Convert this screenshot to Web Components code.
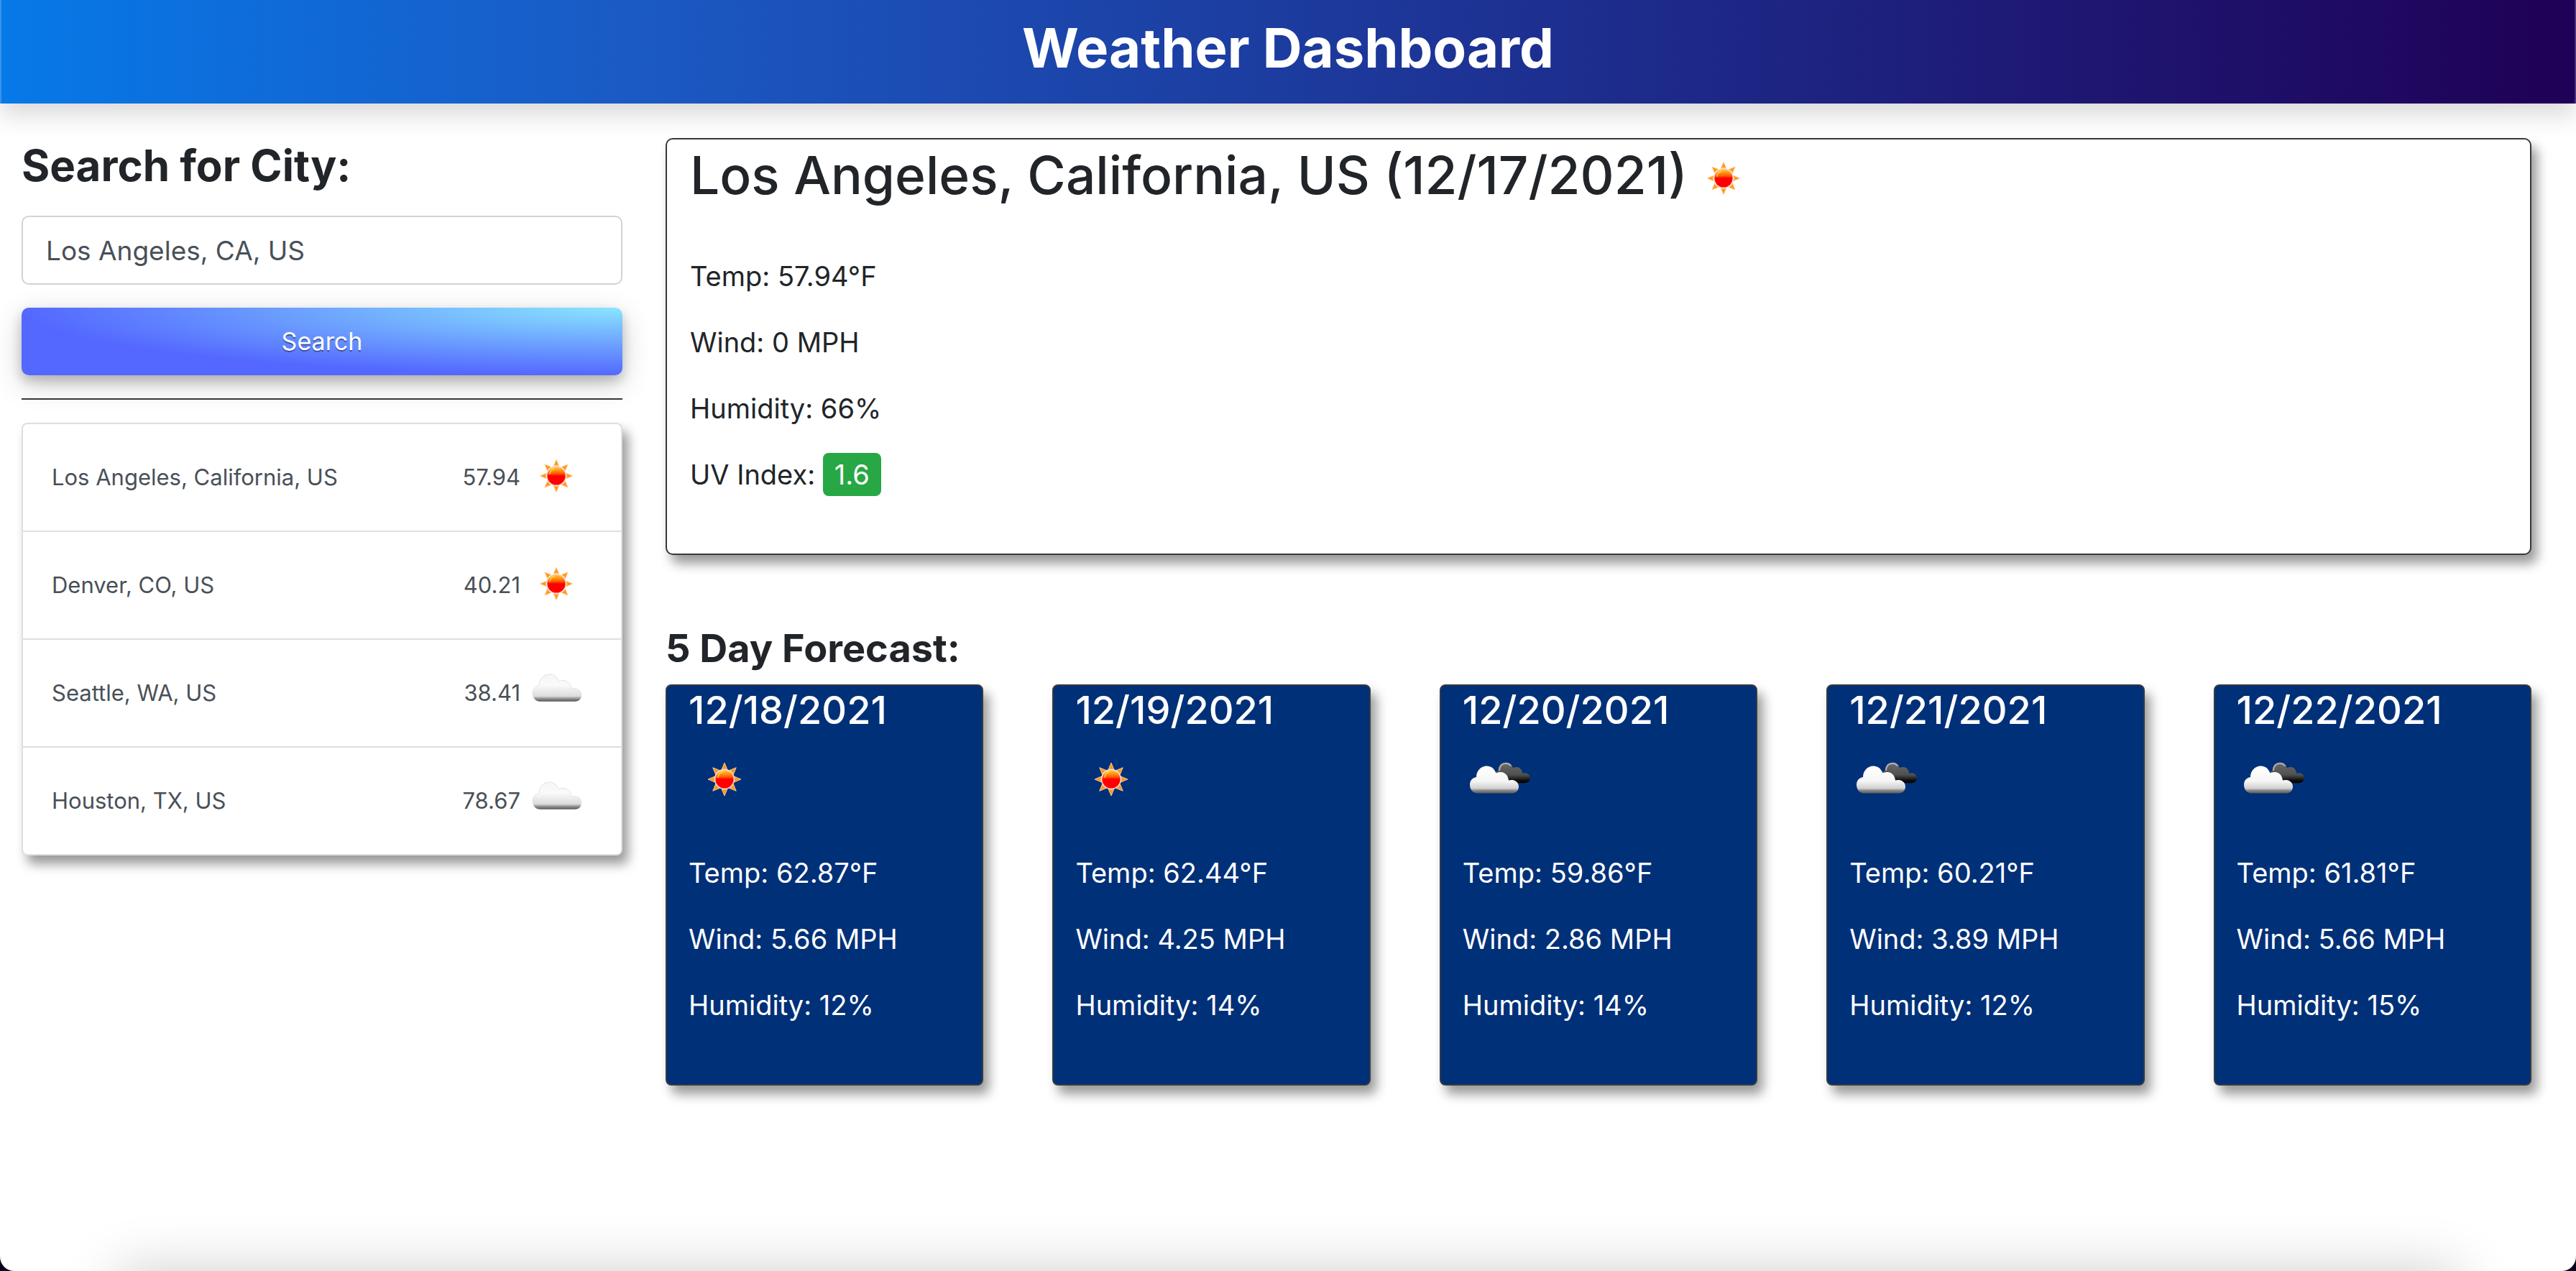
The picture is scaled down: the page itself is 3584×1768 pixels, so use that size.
<!DOCTYPE html>
<html lang="en">
<head>
<meta charset="utf-8">
<meta name="viewport" content="width=device-width, initial-scale=1">
<title>Weather Dashboard</title>
<style>
  html { background: #08001c; }
  body { margin: 0; font-family: Inter, "Liberation Sans", sans-serif; font-size: 38px; line-height: 60px; color: #212529; --edge: #343a40; --lift: 8px 12px 16px rgba(0, 0, 0, .4); }
</style>
</head>
<body>
<weather-app>
  <app-header slot="header">Weather Dashboard</app-header>
  <city-search slot="side" value="Los Angeles, CA, US">Search for City:</city-search>
  <city-history slot="side">
    <history-item temp="57.94" icon="clear">Los Angeles, California, US</history-item>
    <history-item temp="40.21" icon="clear">Denver, CO, US</history-item>
    <history-item temp="38.41" icon="clouds">Seattle, WA, US</history-item>
    <history-item temp="78.67" icon="clouds">Houston, TX, US</history-item>
  </city-history>
  <current-weather icon="clear" temp="57.94" wind="0" humidity="66" uv="1.6">Los Angeles, California, US (12/17/2021)</current-weather>
  <forecast-list>
    <span slot="title">5 Day Forecast:</span>
    <forecast-card icon="clear" temp="62.87" wind="5.66" humidity="12">12/18/2021</forecast-card>
    <forecast-card icon="clear" temp="62.44" wind="4.25" humidity="14">12/19/2021</forecast-card>
    <forecast-card icon="broken" temp="59.86" wind="2.86" humidity="14">12/20/2021</forecast-card>
    <forecast-card icon="broken" temp="60.21" wind="3.89" humidity="12">12/21/2021</forecast-card>
    <forecast-card icon="broken" temp="61.81" wind="5.66" humidity="15">12/22/2021</forecast-card>
  </forecast-list>
</weather-app>
<script>
class Base extends HTMLElement {
  constructor() {
    super();
    this.attachShadow({ mode: "open" });
  }
  connectedCallback() {
    this.shadowRoot.innerHTML = `<style>*{box-sizing:border-box}h1,h2,h3,p,ul{margin:0;padding:0}${this.css()}</style>${this.html()}`;
  }
  at(name) { return this.getAttribute(name) || ""; }
}

customElements.define("weather-app", class extends Base {
  css() { return `
    :host { display: flex; flex-direction: column; position: relative; overflow: hidden; box-sizing: border-box; min-height: 100vh; background: #fff; border-radius: 0 0 20px 20px; }
    .columns { display: grid; grid-template-columns: 1fr 3fr; padding-top: 48px; flex: 1; }
    aside { padding: 0 30px; min-width: 0; }
    main { padding: 0 62px 48px 30px; min-width: 0; }
    footer { height: 100px; flex: none; margin: 0 164px -100px; box-shadow: 0 0 80px rgba(0, 0, 0, .2); }`; }
  html() { return `<slot name="header"></slot><div class="columns"><aside><slot name="side"></slot></aside><main><slot></slot></main></div><footer></footer>`; }
});

customElements.define("app-header", class extends Base {
  css() { return `
    :host { display: block; }
    header { padding: 18px 0 30px; border: 0 solid rgba(255, 255, 255, .2); border-width: 0 2px; background: linear-gradient(to right, #0679e8, #1b59c3 25%, #1f0056) border-box; box-shadow: 0 16px 32px rgba(0, 0, 0, .15); }
    h1 { font-size: 76px; line-height: 96px; font-weight: 700; color: #fff; text-align: center; }`; }
  html() { return `<header><h1><slot></slot></h1></header>`; }
});

customElements.define("city-search", class extends Base {
  css() { return `
    :host { display: block; }
    form { display: flex; flex-direction: column; gap: 32px; padding-bottom: 32px; border-bottom: 2px solid var(--edge); }
    h2 { font-size: 60px; line-height: 76px; font-weight: 700; }
    input { width: 100%; height: 96px; padding: 0 32px; border: 2px solid #ced4da; border-radius: 10px; background: #fff; color: #495057; font: inherit; font-size: 37px; }
    button { height: 94px; border: 0; border-radius: 10px; color: #fff; font: inherit; font-size: 34px; text-shadow: 0 2px 0 rgba(0, 0, 0, .4);
      background: radial-gradient(100% 100% at 100% 0, #89e5ff 0, #5468ff 100%);
      box-shadow: 0 8px 16px rgba(0, 0, 0, .2), 0 12px 40px rgba(0, 0, 0, .19); }`; }
  html() { return `<form><h2><label for="city"><slot></slot></label></h2><input id="city" type="text" value="${this.at("value")}"><button type="button">Search</button></form>`; }
});

customElements.define("city-history", class extends Base {
  css() { return `
    :host { display: block; margin-top: 32px; border: 2px solid #dfdfdf; border-radius: 8px; background: #fff; box-shadow: var(--lift); }
    ::slotted(:not(:last-child)) { border-bottom: 2px solid #dfdfdf; }`; }
  html() { return `<slot></slot>`; }
});

customElements.define("history-item", class extends Base {
  css() { return `
    :host { display: block; }
    a { display: flex; align-items: center; padding: 24px 40px; font-size: 31px; line-height: 48px; color: #495057; text-decoration: none; }
    .city { flex: 1; }`; }
  html() { return `<a href="#"><span class="city"><slot></slot></span><span>${this.at("temp")}</span><weather-icon kind="${this.at("icon")}"></weather-icon></a>`; }
});

customElements.define("current-weather", class extends Base {
  css() { return `
    :host { display: block; border: 2px solid var(--edge); border-radius: 10px; background: #fff; box-shadow: var(--lift); padding: 0 32px 80px; }
    h2 { font-size: 73px; line-height: 100px; font-weight: 500; padding-bottom: 54px; }
    weather-icon { vertical-align: middle; }
    .facts { display: grid; gap: 32px; }
    .uv { display: inline-block; padding: 0 16px; border-radius: 8px; background: #28a745; color: #fff; }`; }
  html() { return `<h2><slot></slot><weather-icon kind="${this.at("icon")}"></weather-icon></h2>
    <div class="facts"><p>Temp: ${this.at("temp")}°F</p><p>Wind: ${this.at("wind")} MPH</p><p>Humidity: ${this.at("humidity")}%</p><p>UV Index: <span class="uv">${this.at("uv")}</span></p></div>`; }
});

customElements.define("forecast-list", class extends Base {
  css() { return `
    :host { display: block; margin-top: 96px; }
    h2 { font-size: 54px; line-height: 68px; font-weight: 700; margin-bottom: 16px; }
    .cards { display: grid; grid-template-columns: repeat(5, minmax(0, 1fr)); gap: 96px; }`; }
  html() { return `<h2><slot name="title"></slot></h2><div class="cards"><slot></slot></div>`; }
});

customElements.define("forecast-card", class extends Base {
  css() { return `
    :host { display: block; border: 2px solid var(--edge); border-radius: 8px; background: #003078; color: #fff; box-shadow: var(--lift); padding: 0 30px 80px; }
    h3 { font-size: 54px; line-height: 68px; font-weight: 500; margin-bottom: 14px; }
    weather-icon { display: block; }
    .facts { display: grid; gap: 32px; margin-top: 48px; }`; }
  html() { return `<h3><slot></slot></h3><weather-icon kind="${this.at("icon")}"></weather-icon>
    <div class="facts"><p>Temp: ${this.at("temp")}°F</p><p>Wind: ${this.at("wind")} MPH</p><p>Humidity: ${this.at("humidity")}%</p></div>`; }
});

/* One cloud outline serves the single cloud and both layers of the broken clouds. */
const CLOUD = "M28 62C21 62 17 56.500 17 50C17 44.500 20.500 40.500 26 39.500C26 30.500 32.500 24 40.500 24C46.500 24 51 27.500 53.500 34C55.500 33 57.500 32.500 60 32.500C65.500 32.500 70 36.500 71 44C72.500 43.500 74 43.200 76 43.500C81.500 44 85 48 85 52.500C85 58 81.500 62 75.500 62Z";
const ART = {
  clear() {
    const rays = [0, 45, 90, 135, 180, 225, 270, 315].map(a => `<path d="M50 25L54 34.500Q50 32.500 46 34.500Z" transform="rotate(${a} 50 48)"/>`).join("");
    return `<defs><linearGradient id="s" x1="0" y1="0" x2="0" y2="1"><stop offset="0" stop-color="#ffd45c"/><stop offset=".18" stop-color="#ffa01c"/><stop offset=".38" stop-color="#ff5a00"/><stop offset=".5" stop-color="#f00"/><stop offset="1" stop-color="#f00"/></linearGradient></defs>
      <g fill="#ff981c" stroke="#ffdca8" stroke-width=".8">${rays}</g>
      <circle cx="50" cy="48" r="13.400" fill="url(#s)" stroke="#ffd9cc" stroke-width="1.600"/>
      <path d="M41 45Q42 39 47 38" fill="none" stroke="#ffe14a" stroke-width="1.800" stroke-linecap="round" opacity=".7"/>`;
  },
  clouds() {
    return `<defs><linearGradient id="c" x1="0" y1="0" x2="0" y2="1"><stop offset="0" stop-color="#f6f6f6"/><stop offset=".4" stop-color="#fafafa"/><stop offset=".8" stop-color="#dcdcdc"/><stop offset=".88" stop-color="#999"/><stop offset=".96" stop-color="#686868"/><stop offset="1" stop-color="#8c8c8c"/></linearGradient>
      <linearGradient id="e" x1="0" y1="0" x2="0" y2="1"><stop offset="0" stop-color="#dedede"/><stop offset=".8" stop-color="#e2e2e2" stop-opacity=".6"/><stop offset="1" stop-color="#888" stop-opacity="0"/></linearGradient></defs>
      <path d="${CLOUD}" fill="url(#c)" stroke="url(#e)"/>`;
  },
  broken() {
    return `<defs><linearGradient id="d" x1="0" y1="0" x2="0" y2="1"><stop offset="0" stop-color="#6a6a6a"/><stop offset=".6" stop-color="#505050"/><stop offset=".88" stop-color="#0c0c0c"/><stop offset="1" stop-color="#000"/></linearGradient>
      <linearGradient id="w" x1="0" y1="0" x2="0" y2="1"><stop offset="0" stop-color="#fff"/><stop offset=".55" stop-color="#f6f6f6"/><stop offset=".82" stop-color="#d0d0d0"/><stop offset=".9" stop-color="#858585"/><stop offset="1" stop-color="#5c5c5c"/></linearGradient></defs>
      <g transform="translate(30 6.700) scale(.75)"><path d="${CLOUD}" fill="url(#d)"/><path d="M28 38C29 29 34 25.500 40 25.500C44 25.500 47 27 49 29.500" fill="none" stroke="#c4c4c4" stroke-width="3" stroke-linecap="round" opacity=".75"/></g>
      <path d="${CLOUD}" transform="translate(-7 5.500)" fill="url(#w)"/>`;
  }
};
customElements.define("weather-icon", class extends Base {
  css() { return `:host { display: inline-block; width: 100px; height: 100px; flex: none; } svg { display: block; width: 100%; height: 100%; }`; }
  html() { return `<svg viewBox="0 0 100 100" aria-hidden="true">${ART[this.at("kind")]()}</svg>`; }
});
</script>
</body>
</html>
